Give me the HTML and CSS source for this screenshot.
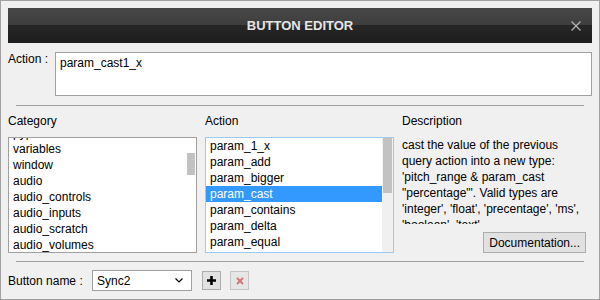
FILE: index.html
```html
<!DOCTYPE html>
<html lang="en">
<head>
  <meta charset="UTF-8" />
  <meta name="viewport" content="width=device-width, initial-scale=1.0"/>
  <title>Button Editor</title>
  <link rel="stylesheet" href="styles.css">
</head>

<body>
  <div class="window">
    <!-- Title bar -->
    <header class="titlebar">
      <h1 class="title">BUTTON EDITOR</h1>
      <span class="close">
        <svg viewBox="0 0 10 10" width="10" height="10" xmlns="http://www.w3.org/2000/svg">
          <path d="M0.5,0.5 L9.5,9.5 M9.5,0.5 L0.5,9.5" stroke="#b4b4b4" stroke-width="1.3" fill="none"/>
        </svg>
      </span>
    </header>

    <!-- Action script -->
    <div class="action-row">
      <label class="field-label" for="actionText">Action :</label>
      <textarea id="actionText" class="action-input" spellcheck="false">param_cast1_x</textarea>
    </div>

    <hr class="sep">

    <!-- Category / Action / Description -->
    <section class="columns">
      <div class="col">
        <h2 class="col-title">Category</h2>
        <div class="listbox">
          <ul class="items items-scrolled">
            <li>pypad</li>
            <li>variables</li>
            <li>window</li>
            <li>audio</li>
            <li>audio_controls</li>
            <li>audio_inputs</li>
            <li>audio_scratch</li>
            <li>audio_volumes</li>
          </ul>
          <div class="scrollbar">
            <div class="thumb thumb-category"></div>
          </div>
        </div>
      </div>

      <div class="col">
        <h2 class="col-title">Action</h2>
        <div class="listbox focused">
          <ul class="items">
            <li>param_1_x</li>
            <li>param_add</li>
            <li>param_bigger</li>
            <li class="selected">param_cast</li>
            <li>param_contains</li>
            <li>param_delta</li>
            <li>param_equal</li>
          </ul>
          <div class="scrollbar track">
            <div class="thumb thumb-action"></div>
          </div>
        </div>
      </div>

      <div class="col col-desc">
        <h2 class="col-title">Description</h2>
        <p class="desc-text">
          cast the value of the previous query action into a new type: 'pitch_range &amp; param_cast "percentage"'. Valid types are 'integer', 'float', 'precentage', 'ms', 'boolean', 'text'
        </p>
        <button class="btn doc-btn">Documentation...</button>
      </div>
    </section>

    <hr class="sep sep-bottom">

    <!-- Button name -->
    <footer class="bottom-row">
      <span class="name-label">Button name :</span>
      <div class="select">
        <span>Sync2</span>
        <svg viewBox="0 0 8 5" width="8" height="5" xmlns="http://www.w3.org/2000/svg">
          <path d="M0.5,0.5 L4,4 L7.5,0.5" stroke="#000" stroke-width="1.2" fill="none"/>
        </svg>
      </div>
      <button class="btn icon-btn add-btn" title="Add">
        <svg viewBox="0 0 9 9" width="9" height="9" xmlns="http://www.w3.org/2000/svg">
          <path d="M4.5,0 V9 M0,4.5 H9" stroke="#000" stroke-width="2.6" fill="none"/>
        </svg>
      </button>
      <button class="btn icon-btn del-btn" title="Delete">
        <svg viewBox="0 0 8 8" width="8" height="8" xmlns="http://www.w3.org/2000/svg">
          <path d="M1,1 L7,7 M7,1 L1,7" stroke="#d27878" stroke-width="2" fill="none"/>
        </svg>
      </button>
    </footer>
  </div>
</body>
</html>
```

FILE: styles.css
```css
/* Reset */
* {
  margin: 0;
  padding: 0;
  box-sizing: border-box;
}
body {
  font-family: "Liberation Sans", Arial, sans-serif;
  font-size: 12px;
  color: #000;
  background: #f0f0f0;
}

/* Dialog frame */
.window {
  width: 600px;
  height: 300px;
  overflow: hidden;
  border: 1px solid #a0a0a0;
  background: #f0f0f0;
  padding: 7px 7px 0;
}

/* Dark title bar with split gradient */
.titlebar {
  height: 35px;
  display: grid;
  grid-template-columns: 1fr auto 1fr;
  align-items: center;
  background: linear-gradient(#484848 0, #3d3d3d 17px, #262626 17px, #1e1e1e 100%);
}
.title {
  grid-column: 2;
  font-size: 13px;
  font-weight: bold;
  color: #e6e6e6;
  line-height: 16px;
}
.close {
  grid-column: 3;
  justify-self: end;
  margin-right: 11px;
  display: flex;
}

/* Action text */
.action-row {
  display: flex;
  margin-top: 9px;
}
.field-label {
  width: 47px;
  line-height: 14px;
}
.action-input {
  flex: 1;
  height: 44px;
  border: 1px solid #a0a0a0;
  background: #fff;
  padding: 2px 4px;
  font-family: inherit;
  font-size: 12px;
  line-height: 16px;
  resize: none;
  outline: none;
  overflow: hidden;
}

.sep {
  border: 0;
  border-top: 1px solid #a0a0a0;
  margin: 9px 8px 0;
}
.sep-bottom {
  margin-top: 8px;
}

/* Three columns */
.columns {
  display: grid;
  grid-template-columns: 189px 189px 1fr;
  column-gap: 8px;
  margin-top: 7px;
}
.col {
  display: flex;
  flex-direction: column;
}
.col-title {
  font-size: 12px;
  font-weight: normal;
  line-height: 16px;
  margin-bottom: 8px;
}

.listbox {
  height: 116px;
  border: 1px solid #a0a0a0;
  background: #fff;
  display: flex;
  overflow: hidden;
}
.listbox.focused {
  border-color: #9ccaf0;
}
.items {
  flex: 1;
  list-style: none;
  line-height: 16px;
}
.items li {
  height: 16px;
  padding-left: 4px;
  white-space: nowrap;
}
.items li.selected {
  background: #3399ff;
  color: #fff;
}
.items-scrolled {
  margin-top: -13px;
}

/* Fake scrollbars */
.scrollbar {
  width: 11px;
}
.scrollbar.track {
  background: #f0f0f0;
}
.thumb {
  background: #c2c2c2;
}
.thumb-category {
  margin: 15px 0 0 2px;
  width: 8px;
  height: 22px;
}
.thumb-action {
  margin-left: 1px;
  width: 9px;
  height: 55px;
}

/* Description */
.desc-text {
  line-height: 16px;
  height: 87px;
  overflow: hidden;
  padding-right: 6px;
}
.btn {
  font-family: inherit;
  font-size: 12px;
  color: #000;
  background: #e1e1e1;
  border: 1px solid #adadad;
}
.doc-btn {
  align-self: flex-end;
  margin: 8px 6px 0 0;
  height: 21px;
  padding: 0 5px;
}

/* Bottom row */
.bottom-row {
  display: flex;
  align-items: center;
  height: 21px;
  margin-top: 8px;
}
.name-label {
  width: 84px;
}
.select {
  width: 100px;
  height: 21px;
  border: 1px solid #a0a0a0;
  background: #fff;
  display: flex;
  align-items: center;
  justify-content: space-between;
  padding: 0 8px 0 4px;
}
.icon-btn {
  width: 19px;
  height: 19px;
  display: flex;
  align-items: center;
  justify-content: center;
}
.add-btn {
  margin-left: 10px;
}
.del-btn {
  margin-left: 9px;
  background: #e6e6e6;
  border-color: #c4c4c4;
}
```
